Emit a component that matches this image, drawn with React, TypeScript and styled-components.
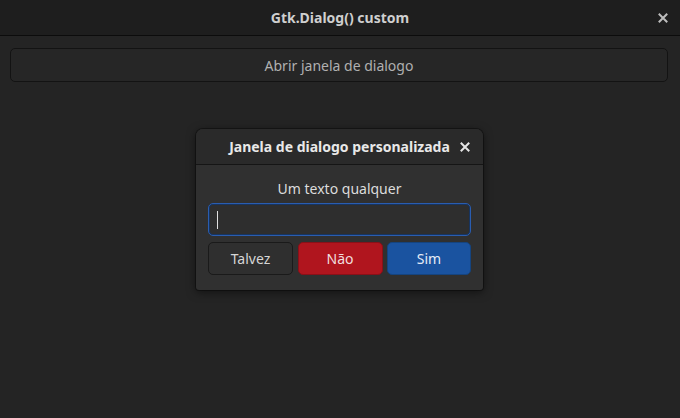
import React from "react";
import styled, { createGlobalStyle } from "styled-components";

const Global = createGlobalStyle`
  html, body { margin: 0; padding: 0; background: #242424; }
  body { font-family: "Noto Sans", "Open Sans", sans-serif; }
  #root { width: 680px; height: 418px; }
`;

const Window = styled.div`
  position: relative;
  width: 680px;
  height: 418px;
  background: #242424;
  display: flex;
  flex-direction: column;
  overflow: hidden;
`;

const HeaderBar = styled.div`
  height: 35px;
  flex: none;
  background: #1e1e1e;
  border-bottom: 1px solid #0c0c0c;
  display: flex;
  align-items: center;
  justify-content: center;
  position: relative;
`;

const Title = styled.div<{ $color?: string }>`
  font-weight: 700;
  font-size: 14px;
  color: ${(p) => p.$color ?? "#cfcfcf"};
`;

const CloseBtn = styled.div<{ $right: number }>`
  position: absolute;
  right: ${(p) => p.$right}px;
  top: 50%;
  transform: translateY(-50%);
  width: 12px;
  height: 12px;
  display: flex;
  align-items: center;
  justify-content: center;
`;

const Content = styled.div`
  padding: 12px 12px 0 10px;
  display: flex;
  flex-direction: column;
`;

const WideButton = styled.button`
  height: 34px;
  border: 1px solid #131313;
  border-radius: 5px;
  background: #262626;
  color: #b0b0b0;
  font-family: inherit;
  font-size: 14px;
  box-sizing: border-box;
`;

const Dialog = styled.div`
  position: absolute;
  left: 196px;
  top: 129px;
  width: 287px;
  height: 161px;
  border-radius: 7px 7px 3px 3px;
  background: #303030;
  box-shadow: 0 2px 10px rgba(0, 0, 0, 0.55), 0 0 0 1px rgba(0, 0, 0, 0.35);
  display: flex;
  flex-direction: column;
  overflow: hidden;
`;

const DialogHeader = styled.div`
  height: 36px;
  flex: none;
  background: #2a2a2a;
  border-bottom: 1px solid #151515;
  display: flex;
  align-items: center;
  justify-content: center;
  position: relative;
  box-sizing: border-box;
`;

const DialogBody = styled.div`
  padding: 14px 12px 0 12px;
  display: flex;
  flex-direction: column;
`;

const Label = styled.div`
  text-align: center;
  font-size: 14px;
  color: #dcdcdc;
  height: 20px;
  line-height: 20px;
`;

const Entry = styled.div`
  margin-top: 4px;
  height: 33px;
  box-sizing: border-box;
  border: 1px solid #2a5db0;
  box-shadow: inset 0 0 0 1px #17345f;
  border-radius: 5px;
  background: #2e2e2e;
  display: flex;
  align-items: center;
  padding-left: 8px;
`;

const Caret = styled.div`
  width: 1px;
  height: 18px;
  background: #e0e0e0;
`;

const ButtonRow = styled.div`
  margin-top: 6px;
  display: grid;
  grid-template-columns: 85px 85px 84px;
  justify-content: space-between;
`;

const tones = {
  neutral: { bg: "#2f2f2f", border: "#1a1a1a", color: "#d6d6d6" },
  danger: { bg: "#b0151e", border: "#8a1018", color: "#f0dede" },
  suggested: { bg: "#1a53a0", border: "#15447f", color: "#e4ecf6" },
};

const ActionButton = styled.button<{ $tone: keyof typeof tones }>`
  height: 33px;
  box-sizing: border-box;
  border-radius: 5px;
  border: 1px solid ${(p) => tones[p.$tone].border};
  background: ${(p) => tones[p.$tone].bg};
  color: ${(p) => tones[p.$tone].color};
  font-family: inherit;
  font-size: 14px;
  padding: 0;
`;

const XIcon = ({ color }: { color: string }) => (
  <svg width="10" height="10" viewBox="0 0 10 10">
    <path d="M1.5 1.5 L8.5 8.5 M8.5 1.5 L1.5 8.5" stroke={color} strokeWidth="2" strokeLinecap="square" />
  </svg>
);

export default function App() {
  return (
    <>
      <Global />
      <Window>
        <HeaderBar>
          <Title>Gtk.Dialog() custom</Title>
          <CloseBtn $right={11}>
            <XIcon color="#bdbdbd" />
          </CloseBtn>
        </HeaderBar>
        <Content>
          <WideButton>Abrir janela de dialogo</WideButton>
        </Content>
        <Dialog>
          <DialogHeader>
            <Title $color="#e8e8e8">Janela de dialogo personalizada</Title>
            <CloseBtn $right={12}>
              <XIcon color="#e6e6e6" />
            </CloseBtn>
          </DialogHeader>
          <DialogBody>
            <Label>Um texto qualquer</Label>
            <Entry>
              <Caret />
            </Entry>
            <ButtonRow>
              <ActionButton $tone="neutral">Talvez</ActionButton>
              <ActionButton $tone="danger">Não</ActionButton>
              <ActionButton $tone="suggested">Sim</ActionButton>
            </ButtonRow>
          </DialogBody>
        </Dialog>
      </Window>
    </>
  );
}
